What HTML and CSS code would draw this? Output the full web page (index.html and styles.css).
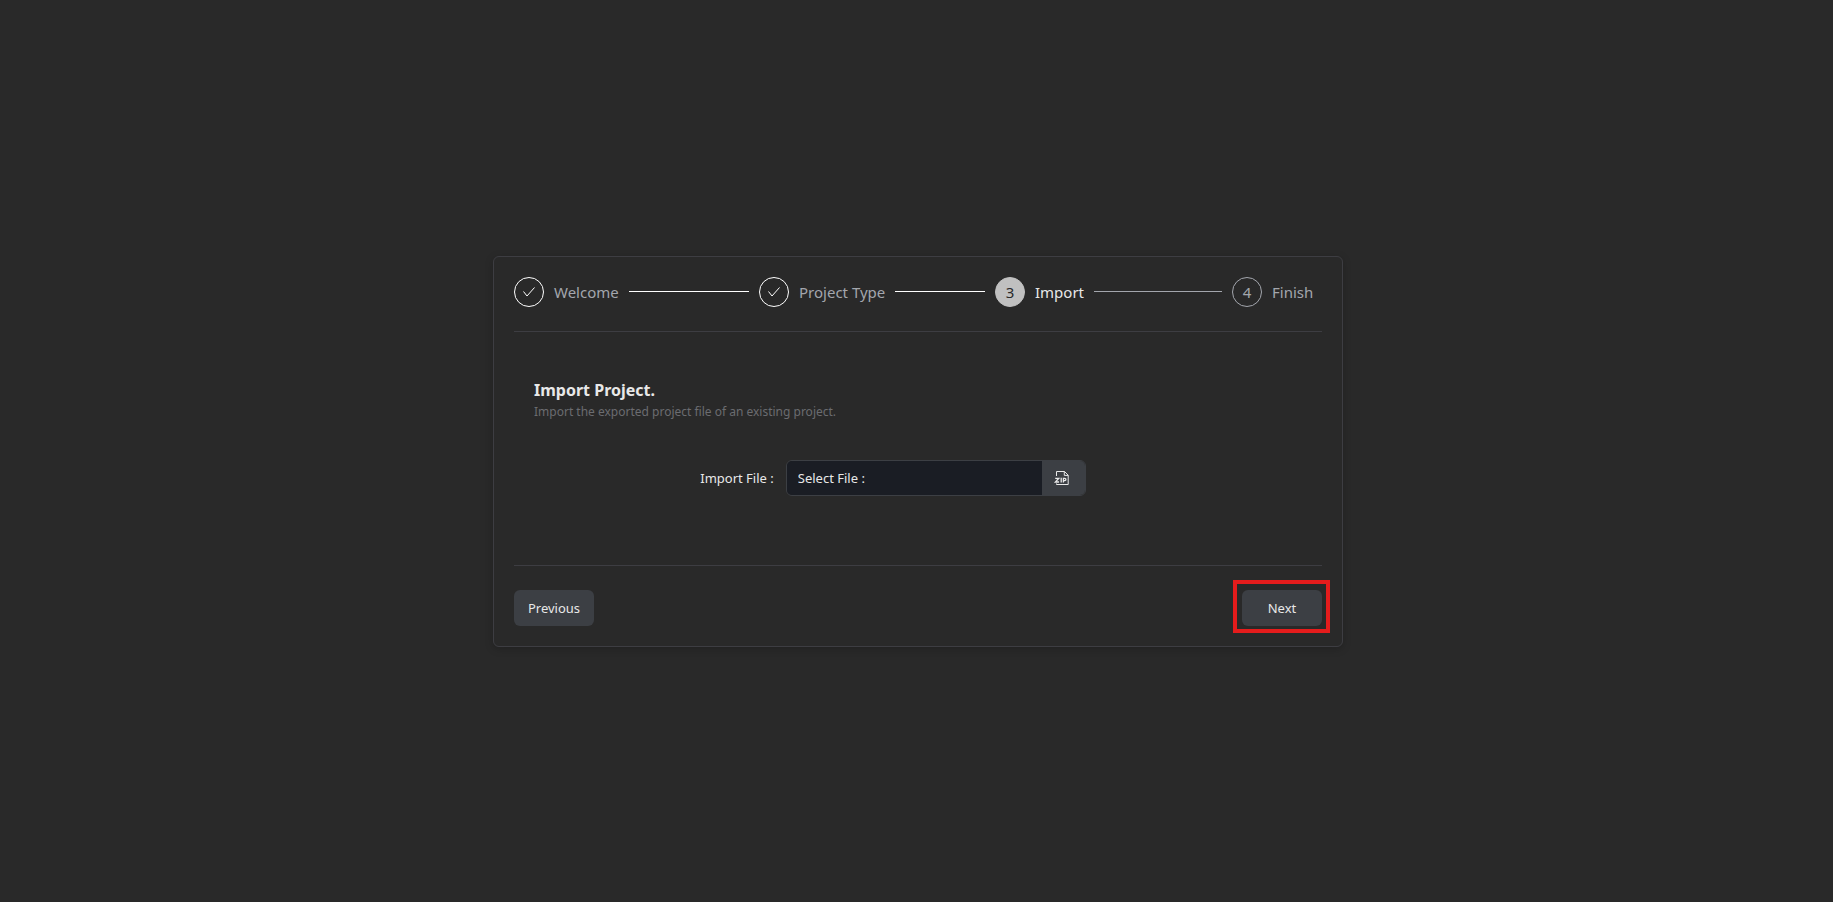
FILE: index.html
```html
<!DOCTYPE html>
<html lang="en">
<head>
<meta charset="utf-8">
<title>Import Project</title>
<link rel="stylesheet" href="styles.css">
</head>
<body>
<main class="page">
  <section class="card">
    <ol class="steps">
      <li class="step done">
        <span class="marker"><svg class="check" viewBox="0 0 14 14" aria-hidden="true"><path d="M1.5 6.5 5 11 12.5 2.5"/></svg></span>
        <span class="step-name">Welcome</span><span class="line"></span>
      </li>
      <li class="step done">
        <span class="marker"><svg class="check" viewBox="0 0 14 14" aria-hidden="true"><path d="M1.5 6.5 5 11 12.5 2.5"/></svg></span>
        <span class="step-name">Project Type</span><span class="line"></span>
      </li>
      <li class="step current" aria-current="step">
        <span class="marker">3</span>
        <span class="step-name">Import</span><span class="line"></span>
      </li>
      <li class="step">
        <span class="marker">4</span>
        <span class="step-name">Finish</span>
      </li>
    </ol>
    <div class="content">
      <h1 class="title">Import Project.</h1>
      <p class="subtitle">Import the exported project file of an existing project.</p>
      <div class="field">
        <label class="field-label" for="import-file">Import File :</label>
        <div class="file-box">
          <input class="file-input" id="import-file" type="text" placeholder="Select File :">
          <button class="file-button" type="button" aria-label="Choose zip file">
            <svg class="zip" viewBox="0 0 14 14" aria-hidden="true"><path d="M1.5 5V.5H9.5L13.2 4.2V13.5H1.5V12.5M9.3.5V4.4H13.2"/><path class="zip-mark" d="M.2 7.3H3.8L.4 11H4M6.2 6.7V11.6M8.4 11.6V7.3H9.8Q10.9 7.3 10.9 8.4T9.8 9.6H8.4"/></svg>
          </button>
        </div>
      </div>
    </div>
    <footer class="actions">
      <button class="button" type="button">Previous</button>
      <span class="next"><button class="button" type="button">Next</button></span>
    </footer>
  </section>
</main>
</body>
</html>
```
FILE: styles.css
```css
* { box-sizing: border-box; }
body {
  margin: 0;
  background: #292929;
  color: #e8e8e8;
  font: 13px/20px "Noto Sans", "Open Sans", sans-serif;
}
button, input { font: inherit; color: inherit; }
.page {
  min-height: 100vh;
  display: flex;
  align-items: center;
  justify-content: center;
  padding-left: 3px;
}
.card {
  width: 100%;
  max-width: 850px;
  padding: 20px;
  border: 1px solid #3d3d42;
  border-radius: 6px;
  box-shadow: 0 2px 8px rgba(0, 0, 0, .2);
}
.steps {
  display: grid;
  grid-template-columns: 245fr 236fr 237fr 90fr;
  margin: 0;
  padding: 0 0 24px;
  list-style: none;
  border-bottom: 1px solid #3d3d42;
  font-size: 15px;
  color: #a3a6ad;
}
.step { display: flex; align-items: center; gap: 10px; white-space: nowrap; }
.step:not(:last-child) { padding-right: 10px; }
.marker {
  flex: none;
  width: 30px;
  height: 30px;
  display: flex;
  align-items: center;
  justify-content: center;
  border: 1px solid #a3a6ad;
  border-radius: 50%;
}
.line { flex: 1; height: 1px; background: #a3a6ad; }
.done .marker { border-color: #fff; color: #fff; }
.done .line { background: #fff; }
.current { color: #e8e8e8; }
.current .marker { background: #c0c0c0; border-color: #c0c0c0; color: #292929; }
.check { width: 14px; height: 14px; fill: none; stroke: #fff; }
.content { padding: 46px 20px 69px; border-bottom: 1px solid #3d3d42; }
.title { margin: 0; font-size: 16px; line-height: 24px; font-weight: 700; }
.subtitle { margin: 0; font-size: 12px; line-height: 20px; color: #6b6c70; }
.field { display: flex; align-items: center; justify-content: center; gap: 12px; margin-top: 38px; margin-right: 50px; }
.file-box {
  display: flex;
  width: 300px;
  height: 36px;
  border: 1px solid #3c3f44;
  border-radius: 6px;
  overflow: hidden;
}
.file-input { flex: 1; min-width: 0; padding: 0 11px; border: 0; background: #1a1d24; }
.file-input::placeholder { color: #e8e8e8; opacity: 1; }
.file-button {
  display: flex;
  align-items: center;
  justify-content: center;
  width: 43px;
  padding: 0 3px 0 0;
  border: 0;
  background: #3c3f44;
}
.zip { width: 14px; height: 14px; fill: none; stroke: #e8e8e8; stroke-width: 1; overflow: visible; }
.zip-mark { stroke-width: 1.3; }
.actions { display: flex; justify-content: space-between; padding-top: 24px; }
.button { width: 80px; height: 36px; padding: 0; border: 0; border-radius: 6px; background: #3c3f44; color: #e8e8e8; }
.next { position: relative; display: flex; }
.next::after {
  content: "";
  position: absolute;
  inset: -10px -8px -7px -9px;
  border: 4px solid #e51c1c;
  pointer-events: none;
}
```
